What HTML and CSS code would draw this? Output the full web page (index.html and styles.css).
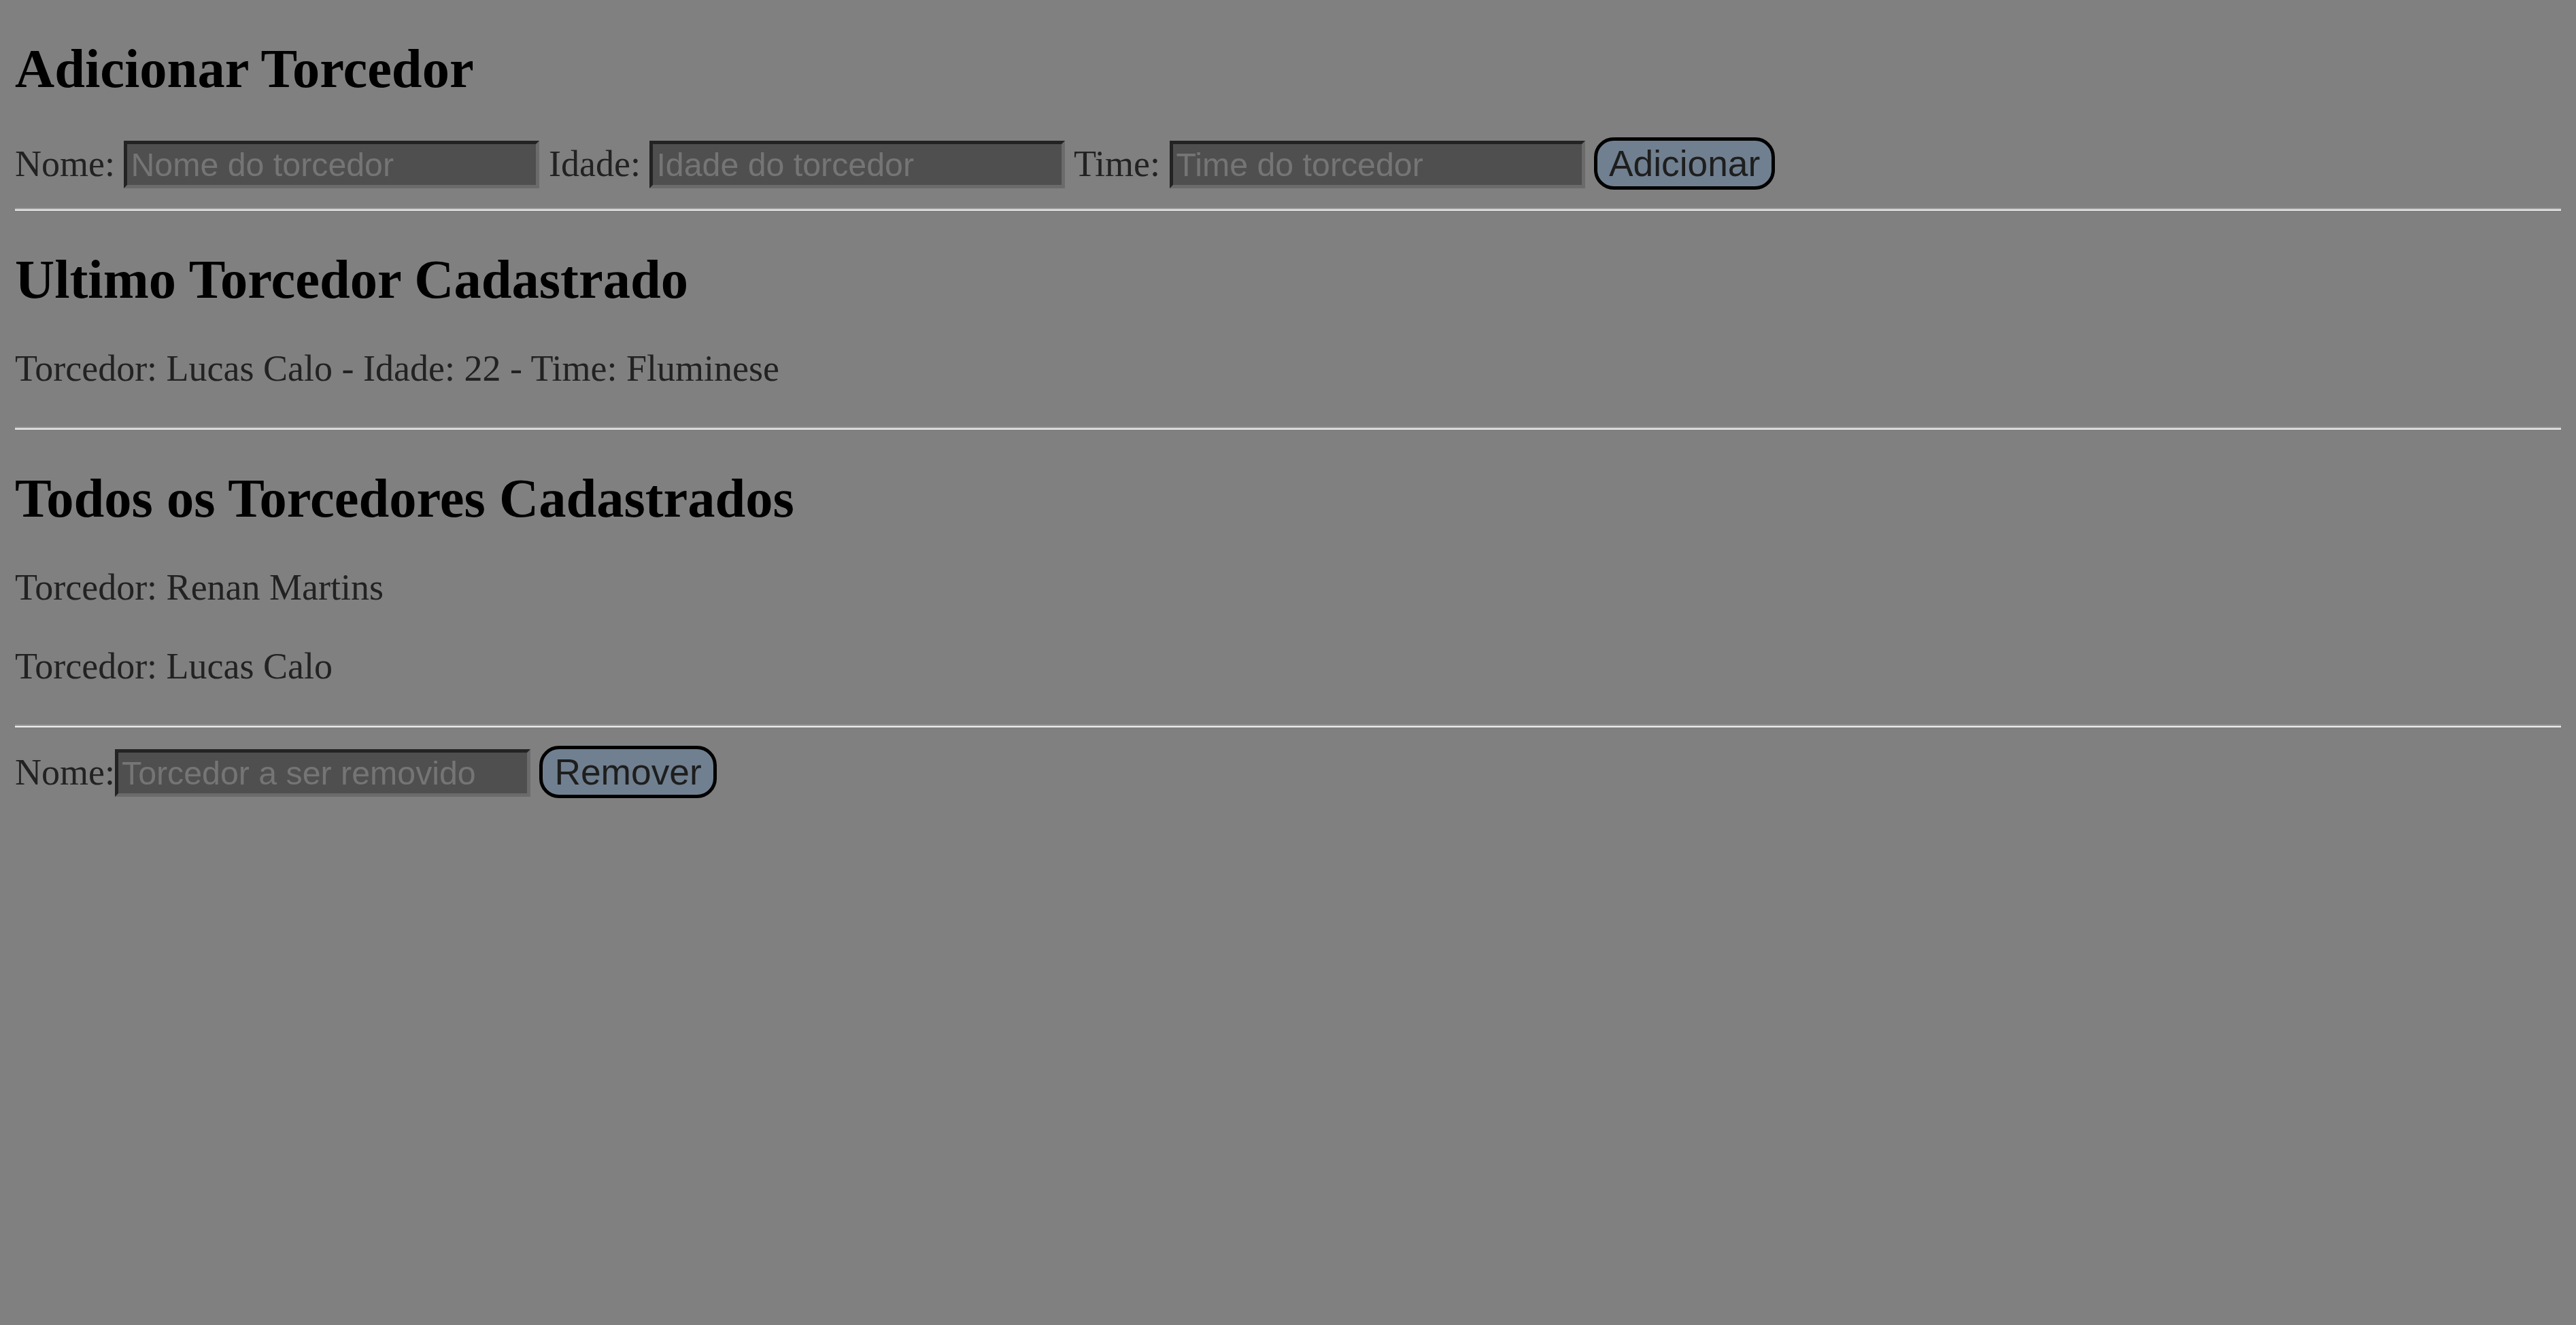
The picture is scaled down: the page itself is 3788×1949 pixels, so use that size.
FILE: index.html
```html
<!DOCTYPE html>
<html lang="pt-BR">
<head>
<meta charset="utf-8">
<title>Torcedores</title>
<link rel="stylesheet" href="styles.css">
</head>
<body>
<h1 class="title">Adicionar Torcedor</h1>
<form class="row">
<label class="lbl">Nome:</label> <input class="field" type="text" placeholder="Nome do torcedor"> <label class="lbl">Idade:</label> <input class="field" type="text" placeholder="Idade do torcedor"> <label class="lbl">Time:</label> <input class="field" type="text" placeholder="Time do torcedor"> <button class="btn" type="button">Adicionar</button>
</form>
<hr class="sep">
<h2 class="title">Ultimo Torcedor Cadastrado</h2>
<p class="line">Torcedor: Lucas Calo - Idade: 22 - Time: Fluminese</p>
<hr class="sep">
<h2 class="title">Todos os Torcedores Cadastrados</h2>
<p class="line">Torcedor: Renan Martins</p>
<p class="line">Torcedor: Lucas Calo</p>
<hr class="sep">
<form class="row">
<label class="lbl">Nome:</label><input class="field" type="text" placeholder="Torcedor a ser removido"> <button class="btn" type="button">Remover</button>
</form>
</body>
</html>
```
FILE: styles.css
```css
html {
  background: #808080;
}
body {
  margin: 0;
  padding: 0 22px;
  background: #808080;
  font-family: "Liberation Serif", "Times New Roman", serif;
  color: #222222;
}
.title {
  margin: 56px 0 56px;
  font-size: 80.5px;
  line-height: 90px;
  font-weight: bold;
  color: #000000;
}
.row {
  margin: 0;
  font-size: 54px;
  line-height: 61px;
  color: #222222;
}
.lbl {
  color: #222222;
}
.field {
  box-sizing: border-box;
  width: 611px;
  height: 70px;
  margin: 0;
  padding: 0 5px;
  border-style: solid;
  border-width: 5px;
  border-color: #232323 #6b6b6b #6b6b6b #232323;
  background: #4f4f4f;
  color: #dddddd;
  font-family: "Liberation Sans", Arial, sans-serif;
  font-size: 48.3px;
  vertical-align: baseline;
  outline: none;
}
.field::placeholder {
  color: #757575;
  opacity: 1;
}
.btn {
  margin: 0;
  padding: 3px 17px;
  border: 5px solid #000000;
  border-radius: 29px;
  background: #708090;
  color: #1e1e1e;
  font-family: "Liberation Sans", Arial, sans-serif;
  font-size: 53.3px;
  line-height: normal;
  vertical-align: baseline;
}
.sep {
  margin: 27px 0;
  height: 0;
  border: none;
  border-top: 2px solid #a2a2a2;
  border-bottom: 2px solid #eeeeee;
}
.line {
  margin: 55px 0;
  font-size: 54px;
  line-height: 61px;
  color: #222222;
}
```
